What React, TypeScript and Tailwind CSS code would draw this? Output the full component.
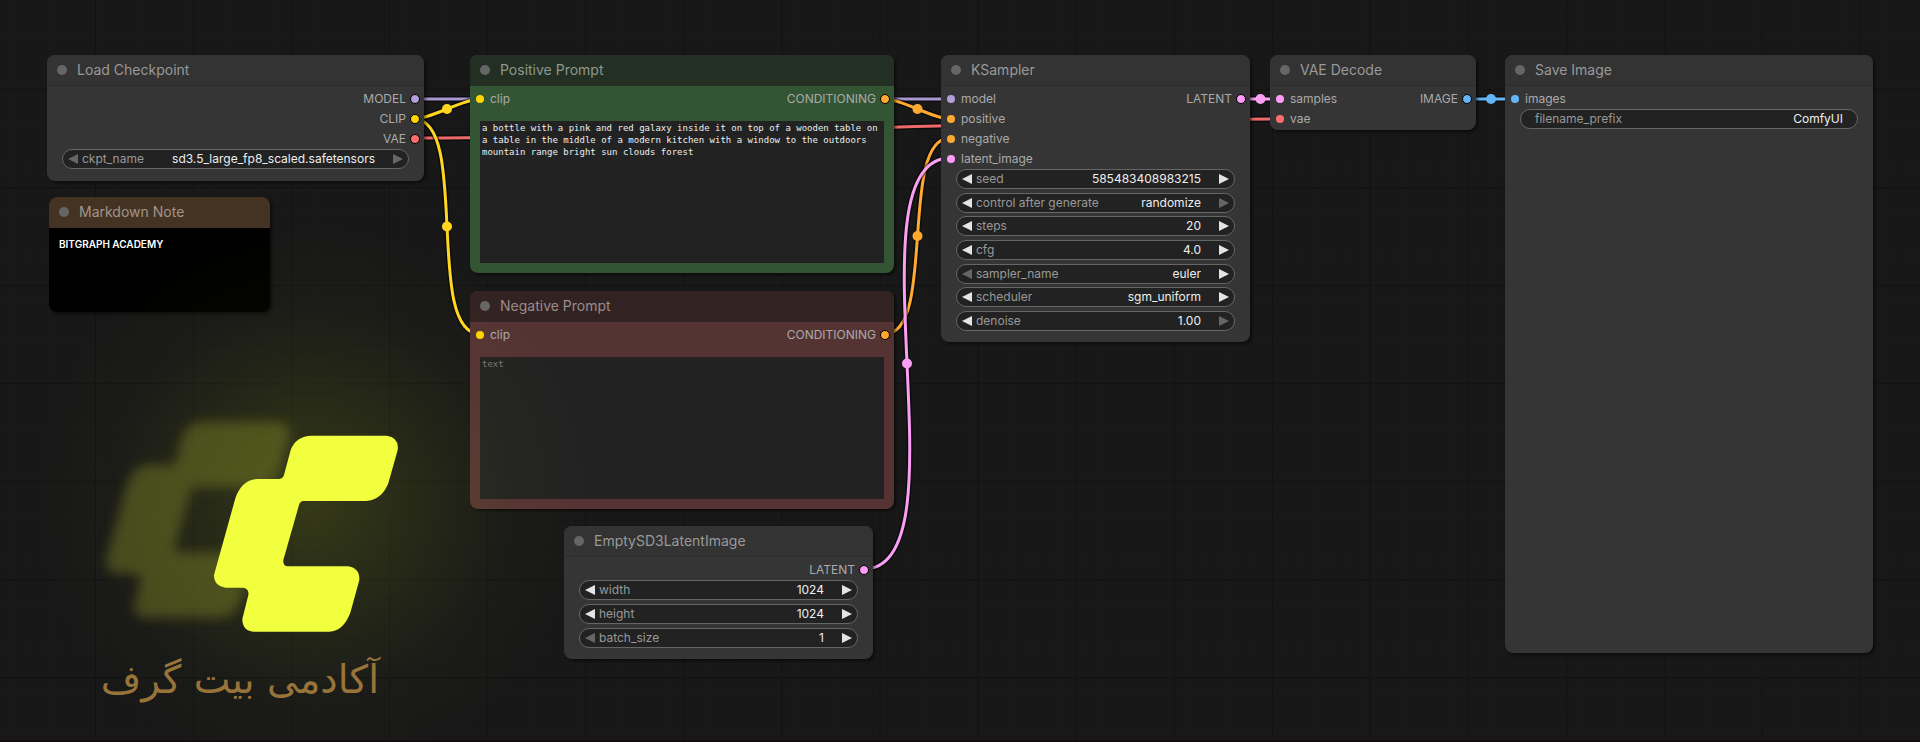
import { useState } from "react";
import type { ReactNode } from "react";
import clsx from "clsx";

type SlotType = "MODEL" | "CLIP" | "VAE" | "CONDITIONING" | "LATENT" | "IMAGE";

interface Slot {
  name: string;
  type: SlotType;
}

interface WidgetDef {
  name: string;
  value: string;
  kind: "number" | "combo" | "text";
  atMin?: boolean;
  atMax?: boolean;
}

const slotFill: Record<SlotType, string> = {
  MODEL: "bg-[#b39ddb]",
  CLIP: "bg-[#ffd500]",
  VAE: "bg-[#ff6e6e]",
  CONDITIONING: "bg-[#ffa931]",
  LATENT: "bg-[#ff9cf9]",
  IMAGE: "bg-[#64b5f6]",
};

const linkColor: Record<SlotType, string> = {
  MODEL: "#a997d2",
  CLIP: "#ffd61f",
  VAE: "#f06a6c",
  CONDITIONING: "#ffa931",
  LATENT: "#fa9ff4",
  IMAGE: "#64b5f6",
};

// [type, x1, y1, x2, y2]
const links: [SlotType, number, number, number, number][] = [
  ["MODEL", 414, 99, 950, 99],
  ["VAE", 414, 138, 1280, 119],
  ["CLIP", 414, 119, 480, 99],
  ["CLIP", 414, 119, 480, 334],
  ["CONDITIONING", 885, 99, 950, 119],
  ["CONDITIONING", 885, 334, 950, 138],
  ["LATENT", 864, 569, 950, 158],
  ["LATENT", 1241, 99, 1280, 99],
  ["IMAGE", 1467, 99, 1515, 99],
];

function linkPath(x1: number, y1: number, x2: number, y2: number) {
  const bend = Math.hypot(x2 - x1, y2 - y1) * 0.25;
  return `M${x1} ${y1}C${x1 + bend} ${y1} ${x2 - bend} ${y2} ${x2} ${y2}`;
}

function Links() {
  return (
    <svg className="absolute inset-0 h-full w-full" aria-hidden="true">
      <defs>
        <pattern id="minor" width="9.8" height="9.8" x="95" y="89" patternUnits="userSpaceOnUse">
          <path d="M0.5 0V9.8M0 0.5H9.8" stroke="#161616" strokeWidth="1" />
        </pattern>
        <pattern id="major" width="98.1" height="98.1" x="95" y="89" patternUnits="userSpaceOnUse">
          <path d="M0.5 0V98.1M0 0.5H98.1" stroke="#121212" strokeWidth="1" />
        </pattern>
      </defs>
      <rect width="100%" height="100%" fill="url(#minor)" />
      <rect width="100%" height="100%" fill="url(#major)" />
      {links.map(([type, x1, y1, x2, y2]) => (
        <g key={`${x1}-${y1}-${x2}-${y2}`} fill="none">
          <path d={linkPath(x1, y1, x2, y2)} stroke="#000" strokeOpacity="0.5" strokeWidth="6" />
          <path d={linkPath(x1, y1, x2, y2)} stroke={linkColor[type]} strokeWidth="3" />
          <circle cx={(x1 + x2) / 2} cy={(y1 + y2) / 2} r="5" fill={linkColor[type]} />
        </g>
      ))}
    </svg>
  );
}

function Arrow({ dir, label, dim, onClick }: { dir: "left" | "right"; label: string; dim?: boolean; onClick?: () => void }) {
  return (
    <button
      type="button"
      aria-label={label}
      disabled={dim}
      onClick={onClick}
      className={clsx("flex shrink-0 items-center", dim ? "text-[#666]" : "text-[#e4e4e4]")}
    >
      <svg width="10" height="10" viewBox="0 0 10 10" fill="currentColor">
        <path d={dir === "left" ? "M10 0V10L0 5Z" : "M0 0V10L10 5Z"} />
      </svg>
    </button>
  );
}

function Widget({ nodeId, widget }: { nodeId: string; widget: WidgetDef }) {
  const [value, setValue] = useState(widget.value);
  const id = `${nodeId}-${widget.name.replace(/ /g, "-")}`;
  const isText = widget.kind === "text";
  const decimals = widget.value.split(".")[1]?.length ?? 0;
  const step = (by: number) => {
    if (widget.kind === "number") setValue((Number(value) + by).toFixed(decimals));
  };

  return (
    <div
      className={clsx(
        "flex h-5 items-center rounded-full border border-[#666] bg-[#222] text-xs",
        isText ? "px-[14px]" : "px-[5px]",
      )}
    >
      {!isText && <Arrow dir="left" label={`Previous ${widget.name}`} dim={widget.atMin} onClick={() => step(-1)} />}
      <label htmlFor={id} className={clsx("shrink-0 whitespace-nowrap text-[#999]", !isText && "ml-1")}>
        {widget.name}
      </label>
      {widget.kind === "combo" ? (
        <select
          id={id}
          value={value}
          onChange={(e) => setValue(e.target.value)}
          className="mr-[18px] min-w-0 flex-1 appearance-none bg-transparent text-right text-[#eee] outline-none [text-align-last:right]"
        >
          <option>{widget.value}</option>
        </select>
      ) : (
        <input
          id={id}
          type="text"
          value={value}
          onChange={(e) => setValue(e.target.value)}
          className={clsx("min-w-0 flex-1 bg-transparent text-right text-[#eee] outline-none", !isText && "mr-[18px]")}
        />
      )}
      {!isText && <Arrow dir="right" label={`Next ${widget.name}`} dim={widget.atMax} onClick={() => step(1)} />}
    </div>
  );
}

interface NodeProps {
  id: string;
  title: string;
  // position and size on the graph canvas
  place: string;
  tone?: string;
  titleTone?: string;
  inputs?: Slot[];
  outputs?: Slot[];
  widgets?: WidgetDef[];
  children?: ReactNode;
}

function GraphNode({
  id,
  title,
  place,
  tone = "bg-[#353535]",
  titleTone = "bg-[#333] border-[#2c2c2c] text-[#999]",
  inputs = [],
  outputs = [],
  widgets = [],
  children,
}: NodeProps) {
  return (
    <section className={clsx("absolute flex flex-col overflow-hidden rounded-lg shadow-[2px_2px_3px_rgba(0,0,0,0.5)]", tone, place)}>
      <header className={clsx("flex h-[31px] shrink-0 items-center gap-[10px] border-b pl-[10px]", titleTone)}>
        <span className="size-[10px] rounded-full bg-[#666]" />
        <h2 className="text-sm">{title}</h2>
      </header>

      {(inputs.length > 0 || outputs.length > 0) && (
        <div className="flex justify-between pt-[3px] text-xs text-[#aaa]">
          <ul className="pl-[6px]">
            {inputs.map((slot) => (
              <li key={slot.name} className="flex h-5 items-center gap-[6px]">
                <span className={clsx("size-2 rounded-full", slotFill[slot.type])} />
                {slot.name}
              </li>
            ))}
          </ul>
          <ul className="pr-1">
            {outputs.map((slot) => (
              <li key={slot.name} className="flex h-5 items-center justify-end gap-1">
                {slot.name}
                <span className={clsx("size-[10px] rounded-full border border-black", slotFill[slot.type])} />
              </li>
            ))}
          </ul>
        </div>
      )}

      {widgets.length > 0 && (
        <div className="flex flex-1 flex-col justify-between px-[15px] pb-[11px]">
          {widgets.map((w) => (
            <Widget key={w.name} nodeId={id} widget={w} />
          ))}
        </div>
      )}

      {children}
    </section>
  );
}

function PromptBox({ label, text = "" }: { label: string; text?: string }) {
  return (
    <textarea
      aria-label={label}
      defaultValue={text}
      placeholder="text"
      spellCheck={false}
      className="mx-[10px] mt-3 mb-[10px] flex-1 resize-none bg-[#222] px-[2px] py-px font-['DejaVu_Sans_Mono',monospace] text-[9px] leading-3 text-[#eee] outline-none placeholder:text-[#777]"
    />
  );
}

const MARK =
  "M695 197H920Q958 202 953 240L925 340Q905 390 858 393H670Q660 394 657 405L610 570Q608 588 624 589H803Q840 594 838 630L811 728Q790 783 748 785H520Q487 782 487 747L505 675Q508 655 488 653H437Q402 648 402 615L466 385Q485 330 532 327H598Q609 326 612 315L632 240Q648 198 695 197Z";

function Brand() {
  return (
    <div className="pointer-events-none absolute top-[200px] left-0 h-[542px] w-[620px] bg-[radial-gradient(circle_at_310px_300px,rgba(190,215,20,0.18),rgba(190,215,20,0.08)_120px,rgba(190,215,20,0.02)_200px,transparent_280px)]">
      <svg className="absolute top-[170px] left-[80px] h-[372px] w-[400px]" viewBox="0 0 1200 1116" aria-hidden="true">
        <defs>
          <filter id="soft" x="-20%" y="-20%" width="140%" height="140%">
            <feGaussianBlur stdDeviation="18" />
          </filter>
        </defs>
        <path d={MARK} transform="translate(-325 -42)" fill="#7a8022" fillOpacity="0.48" filter="url(#soft)" />
        <path d={MARK} fill="#f1ff3f" />
      </svg>
      <p
        dir="rtl"
        lang="fa"
        className="absolute top-[450px] left-[103px] w-[276px] whitespace-nowrap font-['DejaVu_Sans',sans-serif] text-[39px] leading-[60px] text-[#98743a]"
      >
        آکادمی بیت گرف
      </p>
    </div>
  );
}

export default function App() {
  return (
    <main className="relative min-h-screen w-full overflow-hidden border-b-2 border-[#140a12] bg-[#181818] font-['Inter',sans-serif]">
      <Links />

      <GraphNode
        id="checkpoint"
        title="Load Checkpoint"
        place="left-[47px] top-[55px] w-[377px] h-[126px]"
        outputs={[
          { name: "MODEL", type: "MODEL" },
          { name: "CLIP", type: "CLIP" },
          { name: "VAE", type: "VAE" },
        ]}
        widgets={[{ name: "ckpt_name", value: "sd3.5_large_fp8_scaled.safetensors", kind: "combo", atMin: true, atMax: true }]}
      />

      <GraphNode
        id="note"
        title="Markdown Note"
        place="left-[49px] top-[197px] w-[221px] h-[115px]"
        tone="bg-black"
        titleTone="bg-[#432] border-[#432] text-[#a0958a]"
      >
        <p className="px-[10px] py-2 text-[10px] leading-4 font-semibold text-white">BITGRAPH ACADEMY</p>
      </GraphNode>

      <GraphNode
        id="positive"
        title="Positive Prompt"
        place="left-[470px] top-[55px] w-[424px] h-[218px]"
        tone="bg-[#335533]"
        titleTone="bg-[#232f23] border-[#232f23] text-[#8d988d]"
        inputs={[{ name: "clip", type: "CLIP" }]}
        outputs={[{ name: "CONDITIONING", type: "CONDITIONING" }]}
      >
        <PromptBox
          label="Positive prompt"
          text="a bottle with a pink and red galaxy inside it on top of a wooden table on a table in the middle of a modern kitchen with a window to the outdoors mountain range bright sun clouds forest"
        />
      </GraphNode>

      <GraphNode
        id="negative"
        title="Negative Prompt"
        place="left-[470px] top-[291px] w-[424px] h-[218px]"
        tone="bg-[#553333]"
        titleTone="bg-[#332222] border-[#332222] text-[#998c8c]"
        inputs={[{ name: "clip", type: "CLIP" }]}
        outputs={[{ name: "CONDITIONING", type: "CONDITIONING" }]}
      >
        <PromptBox label="Negative prompt" />
      </GraphNode>

      <GraphNode
        id="latent"
        title="EmptySD3LatentImage"
        place="left-[564px] top-[526px] w-[309px] h-[133px]"
        outputs={[{ name: "LATENT", type: "LATENT" }]}
        widgets={[
          { name: "width", value: "1024", kind: "number" },
          { name: "height", value: "1024", kind: "number" },
          { name: "batch_size", value: "1", kind: "number", atMin: true },
        ]}
      />

      <GraphNode
        id="ksampler"
        title="KSampler"
        place="left-[941px] top-[55px] w-[309px] h-[287px]"
        inputs={[
          { name: "model", type: "MODEL" },
          { name: "positive", type: "CONDITIONING" },
          { name: "negative", type: "CONDITIONING" },
          { name: "latent_image", type: "LATENT" },
        ]}
        outputs={[{ name: "LATENT", type: "LATENT" }]}
        widgets={[
          { name: "seed", value: "585483408983215", kind: "number" },
          { name: "control after generate", value: "randomize", kind: "combo", atMax: true },
          { name: "steps", value: "20", kind: "number" },
          { name: "cfg", value: "4.0", kind: "number" },
          { name: "sampler_name", value: "euler", kind: "combo", atMin: true },
          { name: "scheduler", value: "sgm_uniform", kind: "combo" },
          { name: "denoise", value: "1.00", kind: "number", atMax: true },
        ]}
      />

      <GraphNode
        id="decode"
        title="VAE Decode"
        place="left-[1270px] top-[55px] w-[206px] h-[75px]"
        inputs={[
          { name: "samples", type: "LATENT" },
          { name: "vae", type: "VAE" },
        ]}
        outputs={[{ name: "IMAGE", type: "IMAGE" }]}
      />

      <GraphNode
        id="save"
        title="Save Image"
        place="left-[1505px] top-[55px] w-[368px] h-[598px]"
        inputs={[{ name: "images", type: "IMAGE" }]}
        widgets={[{ name: "filename_prefix", value: "ComfyUI", kind: "text" }]}
      />

      <Brand />
    </main>
  );
}
